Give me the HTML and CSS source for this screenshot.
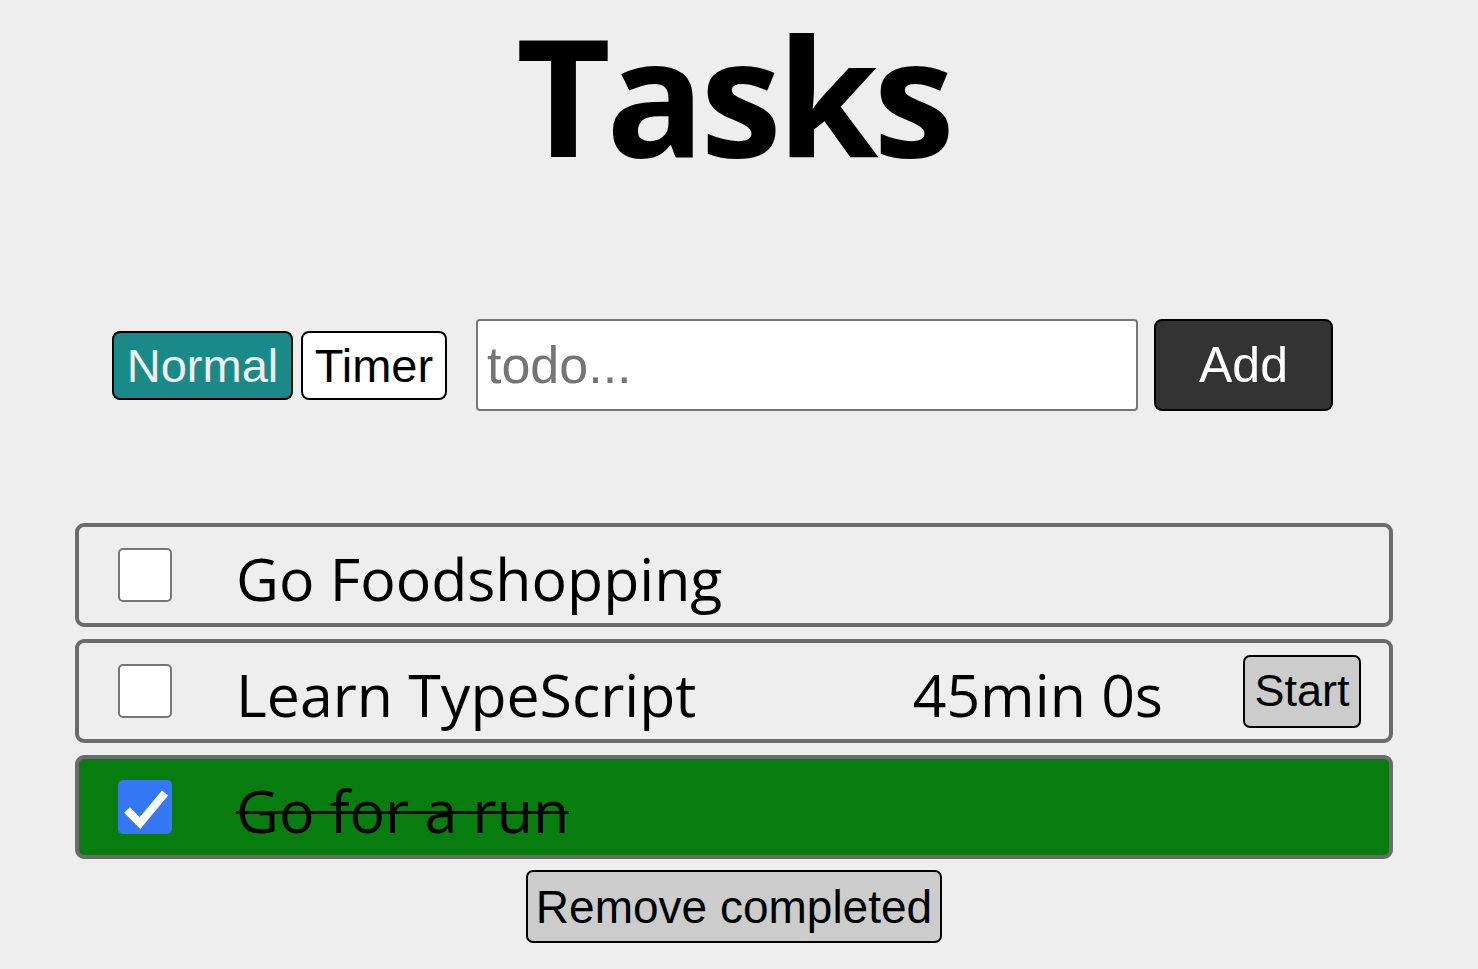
FILE: index.html
```html
<!DOCTYPE html>
<html lang="en">
<head>
<meta charset="utf-8">
<title>Tasks</title>
<link rel="stylesheet" href="styles.css">
</head>
<body>
<h1 class="title">Tasks</h1>
<div class="controls">
  <div class="modes">
    <button class="mode mode-active">Normal</button>
    <button class="mode mode-timer">Timer</button>
  </div>
  <input class="todo-input" type="text" placeholder="todo...">
  <button class="add-btn">Add</button>
</div>
<div class="list">
  <div class="task">
    <span class="box"></span>
    <span class="task-text">Go Foodshopping</span>
  </div>
  <div class="task">
    <span class="box"></span>
    <span class="task-text">Learn TypeScript</span>
    <span class="time">45min 0s</span>
    <button class="start-btn">Start</button>
  </div>
  <div class="task task-done">
    <span class="box box-checked"><svg width="54" height="54" viewBox="0 0 54 54"><polyline points="9,30 22,43 47,13" fill="none" stroke="#fff" stroke-width="8"/></svg></span>
    <span class="task-text">Go for a run</span>
  </div>
  <button class="remove-btn">Remove completed</button>
</div>
</body>
</html>
```
FILE: styles.css
```css
html, body {
  margin: 0;
  padding: 0;
  background: #eeeeee;
}
body {
  font-family: "Open Sans", "Noto Sans", sans-serif;
  color: #000;
}
.title {
  margin: 0;
  padding: 0 12px 0 0;
  font-size: 164px;
  line-height: 188px;
  font-weight: 700;
  letter-spacing: -5px;
  text-align: center;
}
.controls {
  display: flex;
  align-items: center;
  margin-top: 131px;
  padding-left: 112px;
  height: 92px;
}
.modes {
  display: flex;
  gap: 8px;
  margin-right: 29px;
}
.mode {
  box-sizing: border-box;
  width: 181px;
  font-family: "Liberation Sans", Arial, sans-serif;
  font-size: 47px;
  height: 69px;
  padding: 0;
  border: 2px solid #000;
  border-radius: 8px;
  background: #fff;
  color: #000;
}
.mode-timer {
  width: 146px;
}
.mode-active {
  background: #1a8a88;
  color: #eeeeee;
}
.todo-input {
  box-sizing: border-box;
  width: 662px;
  height: 92px;
  border: 2px solid #767676;
  border-radius: 4px;
  background: #fff;
  padding: 0 9px;
  font-family: "Liberation Sans", Arial, sans-serif;
  font-size: 52px;
  margin: 0 16px 0 0;
}
.todo-input::placeholder {
  color: #757575;
}
.add-btn {
  box-sizing: border-box;
  width: 179px;
  height: 92px;
  background: #333333;
  color: #fff;
  border: 2px solid #000;
  border-radius: 8px;
  font-family: "Liberation Sans", Arial, sans-serif;
  font-size: 50px;
}
.list {
  width: 1318px;
  margin: 112px 0 0 75px;
  display: flex;
  flex-direction: column;
  gap: 12px;
}
.task {
  box-sizing: border-box;
  height: 104px;
  border: 4px solid #6b6b6b;
  border-radius: 9px;
  display: flex;
  align-items: center;
  padding: 0 28px 0 39px;
}
.task-done {
  background: #077c0f;
}
.task-done .task-text {
  text-decoration: line-through;
  text-decoration-thickness: 3px;
}
.box {
  box-sizing: border-box;
  width: 54px;
  height: 54px;
  flex: none;
  border: 2px solid #767676;
  border-radius: 5px;
  background: #fff;
  margin-right: 64px;
  display: block;
}
.box-checked {
  background: #3478f6;
  border: none;
}
.box-checked svg {
  display: block;
}
.task-text {
  flex: 1;
  font-size: 59px;
  line-height: 1;
  white-space: nowrap;
  padding-top: 6px;
}
.time {
  font-size: 59px;
  line-height: 1;
  margin-right: 80px;
  padding-top: 6px;
}
.start-btn {
  box-sizing: border-box;
  width: 118px;
  height: 73px;
  background: #cccccc;
  border: 2px solid #000;
  border-radius: 7px;
  font-family: "Liberation Sans", Arial, sans-serif;
  font-size: 45px;
  padding: 0;
}
.remove-btn {
  box-sizing: border-box;
  align-self: center;
  width: 416px;
  height: 73px;
  margin-top: -1px;
  background: #cccccc;
  border: 2px solid #000;
  border-radius: 7px;
  font-family: "Liberation Sans", Arial, sans-serif;
  font-size: 46px;
  padding: 0;
}
```
